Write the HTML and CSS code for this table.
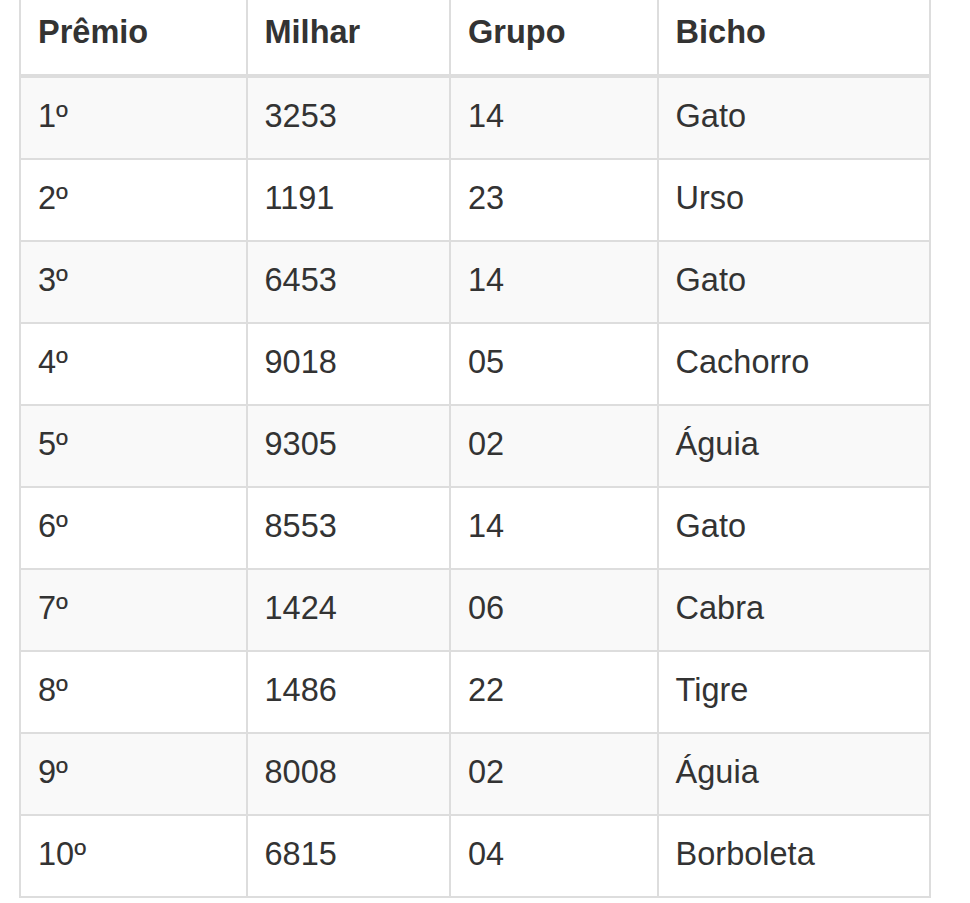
FILE: index.html
```html
<!DOCTYPE html>
<html lang="pt-BR">
<head>
<meta charset="utf-8">
<title>Resultado</title>
<link rel="stylesheet" href="styles.css">
</head>
<body>
<div class="wrap">
<table class="results">
  <colgroup>
    <col class="c1"><col class="c2"><col class="c3"><col class="c4">
  </colgroup>
  <thead>
    <tr><th>Prêmio</th><th>Milhar</th><th>Grupo</th><th>Bicho</th></tr>
  </thead>
  <tbody>
    <tr><td>1º</td><td>3253</td><td>14</td><td>Gato</td></tr>
    <tr><td>2º</td><td>1191</td><td>23</td><td>Urso</td></tr>
    <tr><td>3º</td><td>6453</td><td>14</td><td>Gato</td></tr>
    <tr><td>4º</td><td>9018</td><td>05</td><td>Cachorro</td></tr>
    <tr><td>5º</td><td>9305</td><td>02</td><td>Águia</td></tr>
    <tr><td>6º</td><td>8553</td><td>14</td><td>Gato</td></tr>
    <tr><td>7º</td><td>1424</td><td>06</td><td>Cabra</td></tr>
    <tr><td>8º</td><td>1486</td><td>22</td><td>Tigre</td></tr>
    <tr><td>9º</td><td>8008</td><td>02</td><td>Águia</td></tr>
    <tr><td>10º</td><td>6815</td><td>04</td><td>Borboleta</td></tr>
  </tbody>
</table>
</div>
</body>
</html>
```
FILE: styles.css
```css
html, body {
  margin: 0;
  padding: 0;
  background: #fff;
}
.wrap {
  padding-left: 19px;
  margin-top: -8px;
}
.results {
  border-collapse: collapse;
  width: 912px;
  font-family: "Liberation Sans", Arial, sans-serif;
  font-size: 32.5px;
  color: #333;
  border: 2px solid #ddd;
}
.c1 { width: 227px; }
.c2 { width: 204px; }
.c3 { width: 208px; }
.c4 { width: 273px; }
.results th, .results td {
  border: 2px solid #ddd;
  padding: 16px 17px 20px 17px;
  line-height: 44px;
  text-align: left;
  vertical-align: top;
}
.results th {
  font-weight: bold;
  border-bottom-width: 4px;
}
.results tbody tr:nth-child(odd) {
  background: #f9f9f9;
}
```
